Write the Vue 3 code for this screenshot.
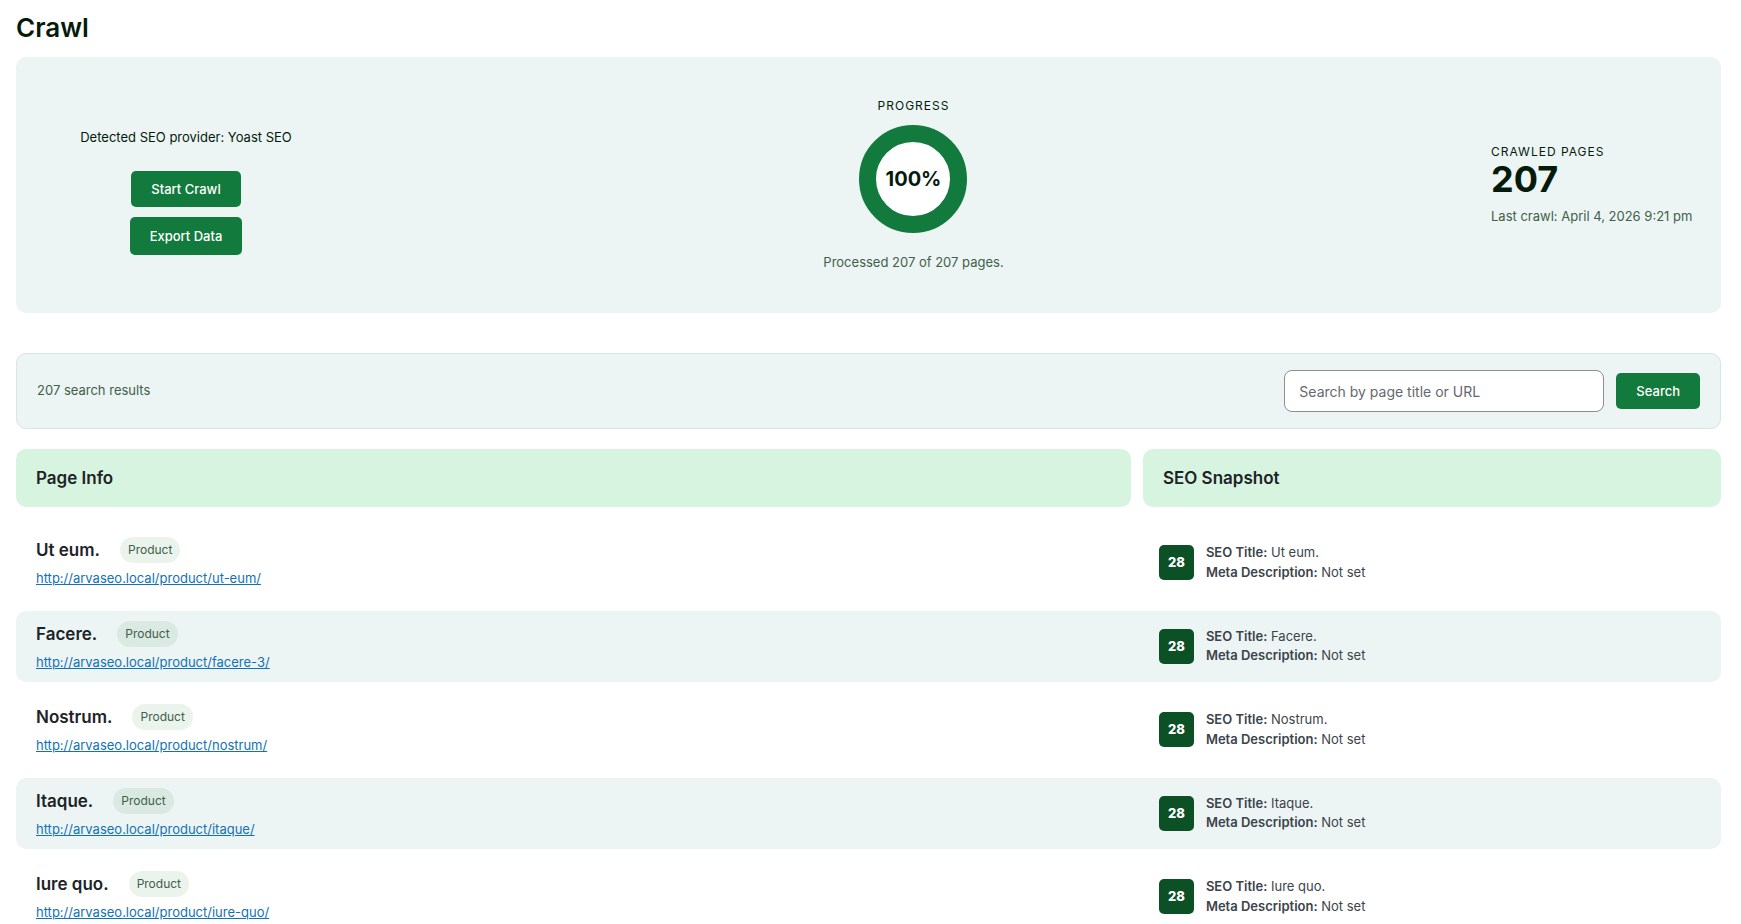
<script setup>
import { ref } from 'vue'

const query = ref('')
const progress = 100
const total = 207

const pages = [
  { title: 'Ut eum.', type: 'Product', slug: 'ut-eum', score: 28 },
  { title: 'Facere.', type: 'Product', slug: 'facere-3', score: 28 },
  { title: 'Nostrum.', type: 'Product', slug: 'nostrum', score: 28 },
  { title: 'Itaque.', type: 'Product', slug: 'itaque', score: 28 },
  { title: 'Iure quo.', type: 'Product', slug: 'iure-quo', score: 28 },
].map((page) => ({ ...page, url: `http://arvaseo.local/product/${page.slug}/` }))
</script>

<template>
  <main class="page">
    <h1 class="heading">Crawl</h1>

    <section class="summary">
      <div class="actions">
        <p class="provider">Detected SEO provider: Yoast SEO</p>
        <button type="button" class="btn">Start Crawl</button>
        <button type="button" class="btn btn-tall">Export Data</button>
      </div>

      <div class="progress">
        <span class="label">Progress</span>
        <div class="ring">{{ progress }}%</div>
        <p class="note">Processed {{ total }} of {{ total }} pages.</p>
      </div>

      <div class="stats">
        <span class="label">Crawled pages</span>
        <strong class="count">{{ total }}</strong>
        <p class="note">Last crawl: April 4, 2026 9:21 pm</p>
      </div>
    </section>

    <form class="toolbar" @submit.prevent>
      <p class="note">{{ total }} search results</p>
      <div class="search">
        <input
          v-model="query"
          class="search-input"
          type="search"
          aria-label="Search by page title or URL"
          placeholder="Search by page title or URL"
        />
        <button type="submit" class="btn">Search</button>
      </div>
    </form>

    <table class="results">
      <thead>
        <tr class="row">
          <th scope="col" class="head">Page Info</th>
          <th scope="col" class="head">SEO Snapshot</th>
        </tr>
      </thead>
      <tbody class="rows">
        <tr v-for="page in pages" :key="page.slug" class="row item">
          <td class="info">
            <div class="name">
              <span class="title">{{ page.title }}</span>
              <span class="pill">{{ page.type }}</span>
            </div>
            <a class="link" :href="page.url">{{ page.url }}</a>
          </td>
          <td class="snapshot">
            <span class="score">{{ page.score }}</span>
            <div class="meta">
              <div><strong>SEO Title:</strong> {{ page.title }}</div>
              <div><strong>Meta Description:</strong> Not set</div>
            </div>
          </td>
        </tr>
      </tbody>
    </table>
  </main>
</template>

<style>
html {
  scrollbar-width: none;
}
body {
  margin: 0;
  background: #fff;
}
</style>

<style scoped>
.page {
  box-sizing: border-box;
  padding: 12px 20px 12px 16px;
  font-family: Inter, "Liberation Sans", sans-serif;
  font-size: 13px;
  line-height: 1.5;
  color: #041b0c;
}
p {
  margin: 0;
}
.heading {
  margin: 0 0 13px;
  font-size: 26px;
  line-height: 32px;
  font-weight: 600;
}
.summary {
  display: flex;
  justify-content: space-between;
  align-items: center;
  padding: 40px 20px;
  border-radius: 10px;
  background: #ecf5f4;
}
.actions {
  display: flex;
  flex-direction: column;
  align-items: center;
  gap: 10px;
  width: 300px;
}
.provider {
  margin: 12px 0 14px;
  line-height: 20px;
}
.btn {
  height: 36px;
  padding: 0 20px;
  border: 0;
  border-radius: 5px;
  background: #127a3c;
  color: #fff;
  font: 500 13px/20px Inter, "Liberation Sans", sans-serif;
  cursor: pointer;
}
.btn-tall {
  height: 38px;
}
.progress {
  display: flex;
  flex-direction: column;
  align-items: center;
}
.label {
  font-size: 12px;
  line-height: 18px;
  letter-spacing: 1px;
  text-transform: uppercase;
}
.ring {
  box-sizing: border-box;
  display: flex;
  align-items: center;
  justify-content: center;
  width: 108px;
  height: 108px;
  margin: 10px 0 20px;
  border: 17px solid #127a3c;
  border-radius: 50%;
  background: #fff;
  font-size: 20px;
  font-weight: 700;
}
.note {
  padding-bottom: 2px;
  line-height: 18px;
  color: #41604a;
}
.stats {
  display: flex;
  flex-direction: column;
  min-width: 210px;
}
.count {
  margin-bottom: 10px;
  font-size: 36px;
  line-height: 36px;
  font-weight: 700;
}
.toolbar {
  display: flex;
  justify-content: space-between;
  align-items: center;
  margin: 40px 0 20px;
  padding: 16px 20px;
  border: 1px solid #d7e6de;
  border-radius: 10px;
  background: #ecf5f4;
}
.search {
  display: flex;
  align-items: center;
  gap: 12px;
}
.search-input {
  box-sizing: border-box;
  width: 320px;
  height: 42px;
  padding: 0 14px;
  border: 1px solid #8c8f94;
  border-radius: 8px;
  background: #fff;
  color: #2c3338;
  font: 400 14px/20px Inter, "Liberation Sans", sans-serif;
  appearance: none;
}
.search-input::placeholder {
  color: #646970;
  opacity: 1;
}
.results {
  display: block;
}
.results thead {
  display: block;
  margin-bottom: 20px;
}
.rows {
  display: flex;
  flex-direction: column;
  gap: 12px;
}
.row {
  display: grid;
  grid-template-columns: 27fr 14fr;
  gap: 12px;
}
.head {
  padding: 16px 20px;
  border-radius: 10px;
  background: #d7f4e0;
  color: #1d2327;
  font-size: 17px;
  line-height: 26px;
  font-weight: 600;
  text-align: left;
}
.item {
  border-radius: 10px;
}
.item:nth-child(even) {
  background: #ecf5f4;
}
.info {
  display: flex;
  flex-direction: column;
  align-items: flex-start;
  gap: 6px;
  padding: 10px 20px;
}
.name {
  display: flex;
  align-items: center;
  gap: 20px;
}
.title {
  color: #1d2327;
  font-size: 17px;
  line-height: 26px;
  font-weight: 600;
}
.pill {
  padding: 4px 8px;
  border-radius: 13px;
  background: rgba(60, 140, 80, 0.1);
  color: #41604a;
  font-size: 12px;
  line-height: 18px;
}
.link {
  color: #1272b4;
}
.snapshot {
  display: flex;
  align-items: center;
  gap: 12px;
  padding: 0 16px;
}
.score {
  display: flex;
  align-items: center;
  justify-content: center;
  width: 35px;
  height: 35px;
  border-radius: 5px;
  background: #0c5026;
  color: #fff;
  font-weight: 800;
}
.meta {
  color: #3c434a;
}
.meta strong {
  font-weight: 600;
}
</style>
